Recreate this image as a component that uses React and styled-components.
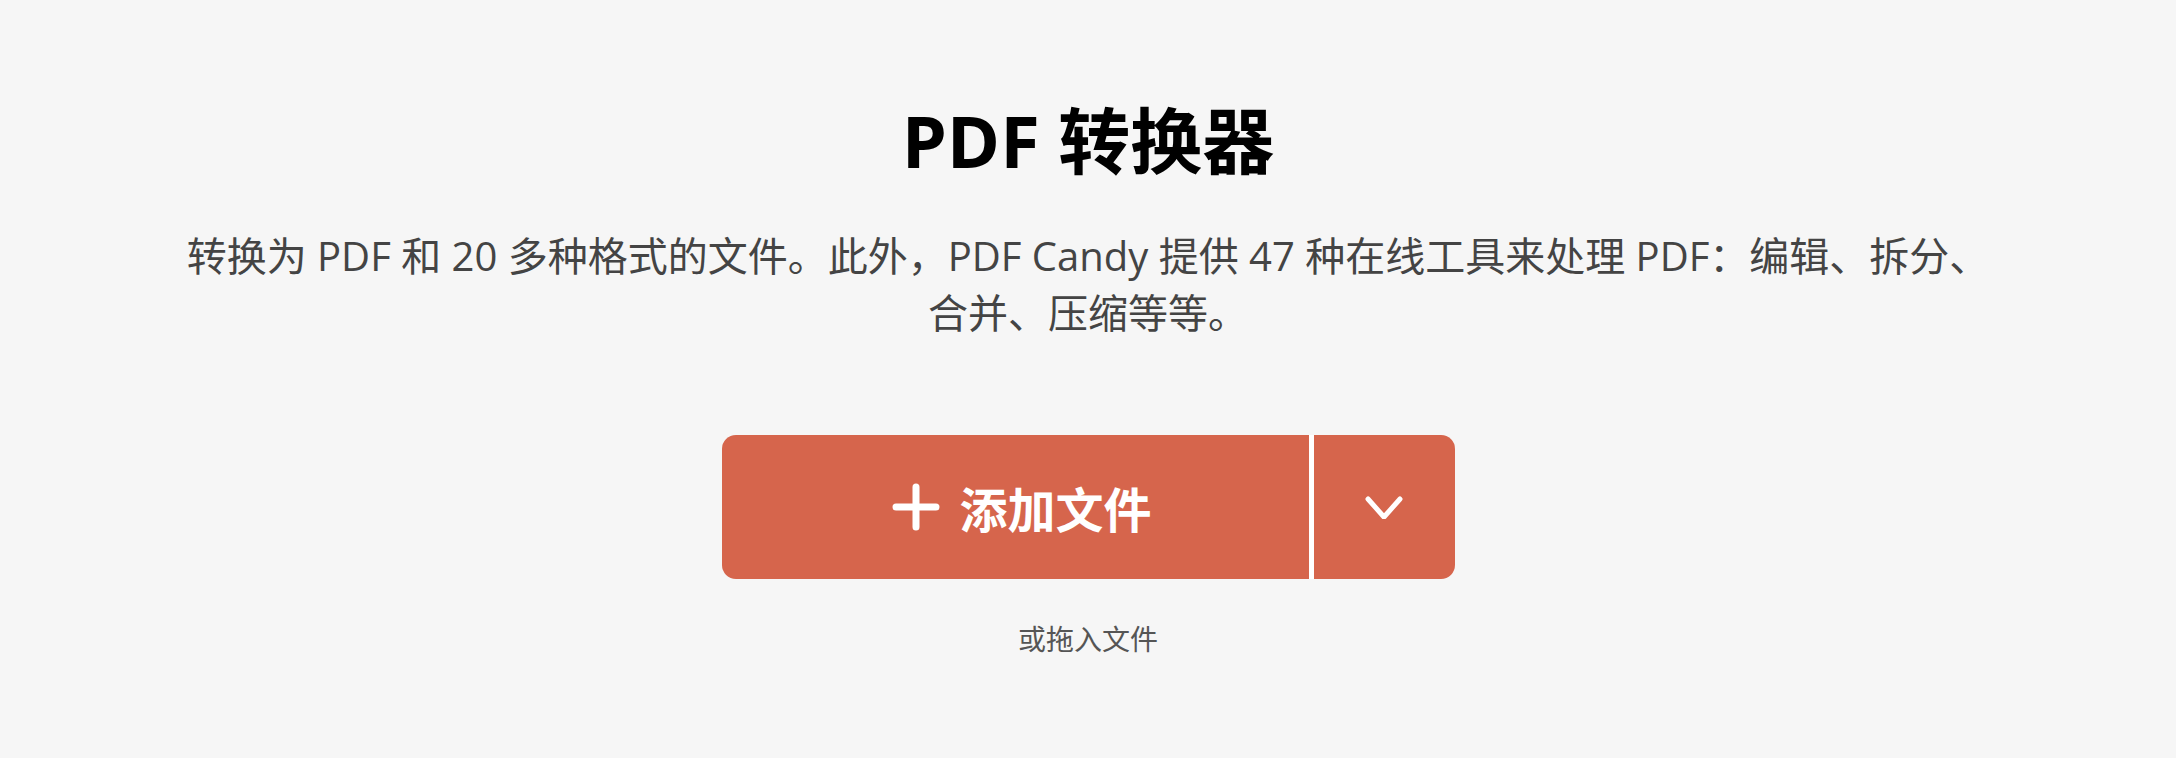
import React from "react";
import styled, { createGlobalStyle } from "styled-components";

const GlobalStyle = createGlobalStyle`
  body {
    margin: 0;
    background: #f6f6f6;
    font-family: "Open Sans", "Noto Sans CJK SC", sans-serif;
  }
`;

const Page = styled.div`
  min-height: 758px;
  display: flex;
  flex-direction: column;
  align-items: center;
  padding-top: 97px;
  box-sizing: border-box;
`;

const Title = styled.h1`
  margin: 0;
  font-size: 72px;
  line-height: 86px;
  font-weight: 700;
  color: #000;
`;

const Description = styled.p`
  margin: 44px 0 0;
  max-width: 1810px;
  text-align: center;
  font-size: 40px;
  line-height: 57px;
  color: #444;
`;

const ButtonGroup = styled.div`
  display: flex;
  margin-top: 94px;
  height: 144px;
`;

const MainButton = styled.button`
  width: 587px;
  display: flex;
  align-items: center;
  justify-content: center;
  gap: 19px;
  padding: 0 0 0 14px;
  border: none;
  border-radius: 14px 0 0 14px;
  background: #d6654c;
  color: #fff;
  font-family: "Open Sans", "Noto Sans CJK SC", sans-serif;
  font-size: 48px;
  font-weight: 700;
  cursor: pointer;
`;

const DropButton = styled.button`
  width: 146px;
  display: flex;
  align-items: center;
  justify-content: center;
  border: none;
  border-left: 5px solid #fff;
  border-radius: 0 14px 14px 0;
  background: #d6654c;
  cursor: pointer;
`;

const Hint = styled.div`
  margin-top: 40px;
  font-size: 28px;
  line-height: 40px;
  color: #555;
`;

const PlusIcon = () => (
  <svg width="48" height="48" viewBox="0 0 48 48">
    <path d="M24 4v40M4 24h40" stroke="#fff" strokeWidth="7" strokeLinecap="round" />
  </svg>
);

const ChevronIcon = () => (
  <svg width="40" height="24" viewBox="0 0 40 24">
    <path d="M4 4l16 18L36 4" fill="none" stroke="#fff" strokeWidth="5" strokeLinecap="round" strokeLinejoin="round" />
  </svg>
);

const App = () => {
  return (
    <Page>
      <GlobalStyle />
      <Title>PDF 转换器</Title>
      <Description>
        转换为 PDF 和 20 多种格式的文件。此外，PDF Candy 提供 47 种在线工具来处理 PDF：编辑、拆分、合并、压缩等等。
      </Description>
      <ButtonGroup>
        <MainButton>
          <PlusIcon />
          添加文件
        </MainButton>
        <DropButton>
          <ChevronIcon />
        </DropButton>
      </ButtonGroup>
      <Hint>或拖入文件</Hint>
    </Page>
  );
};

export default App;
